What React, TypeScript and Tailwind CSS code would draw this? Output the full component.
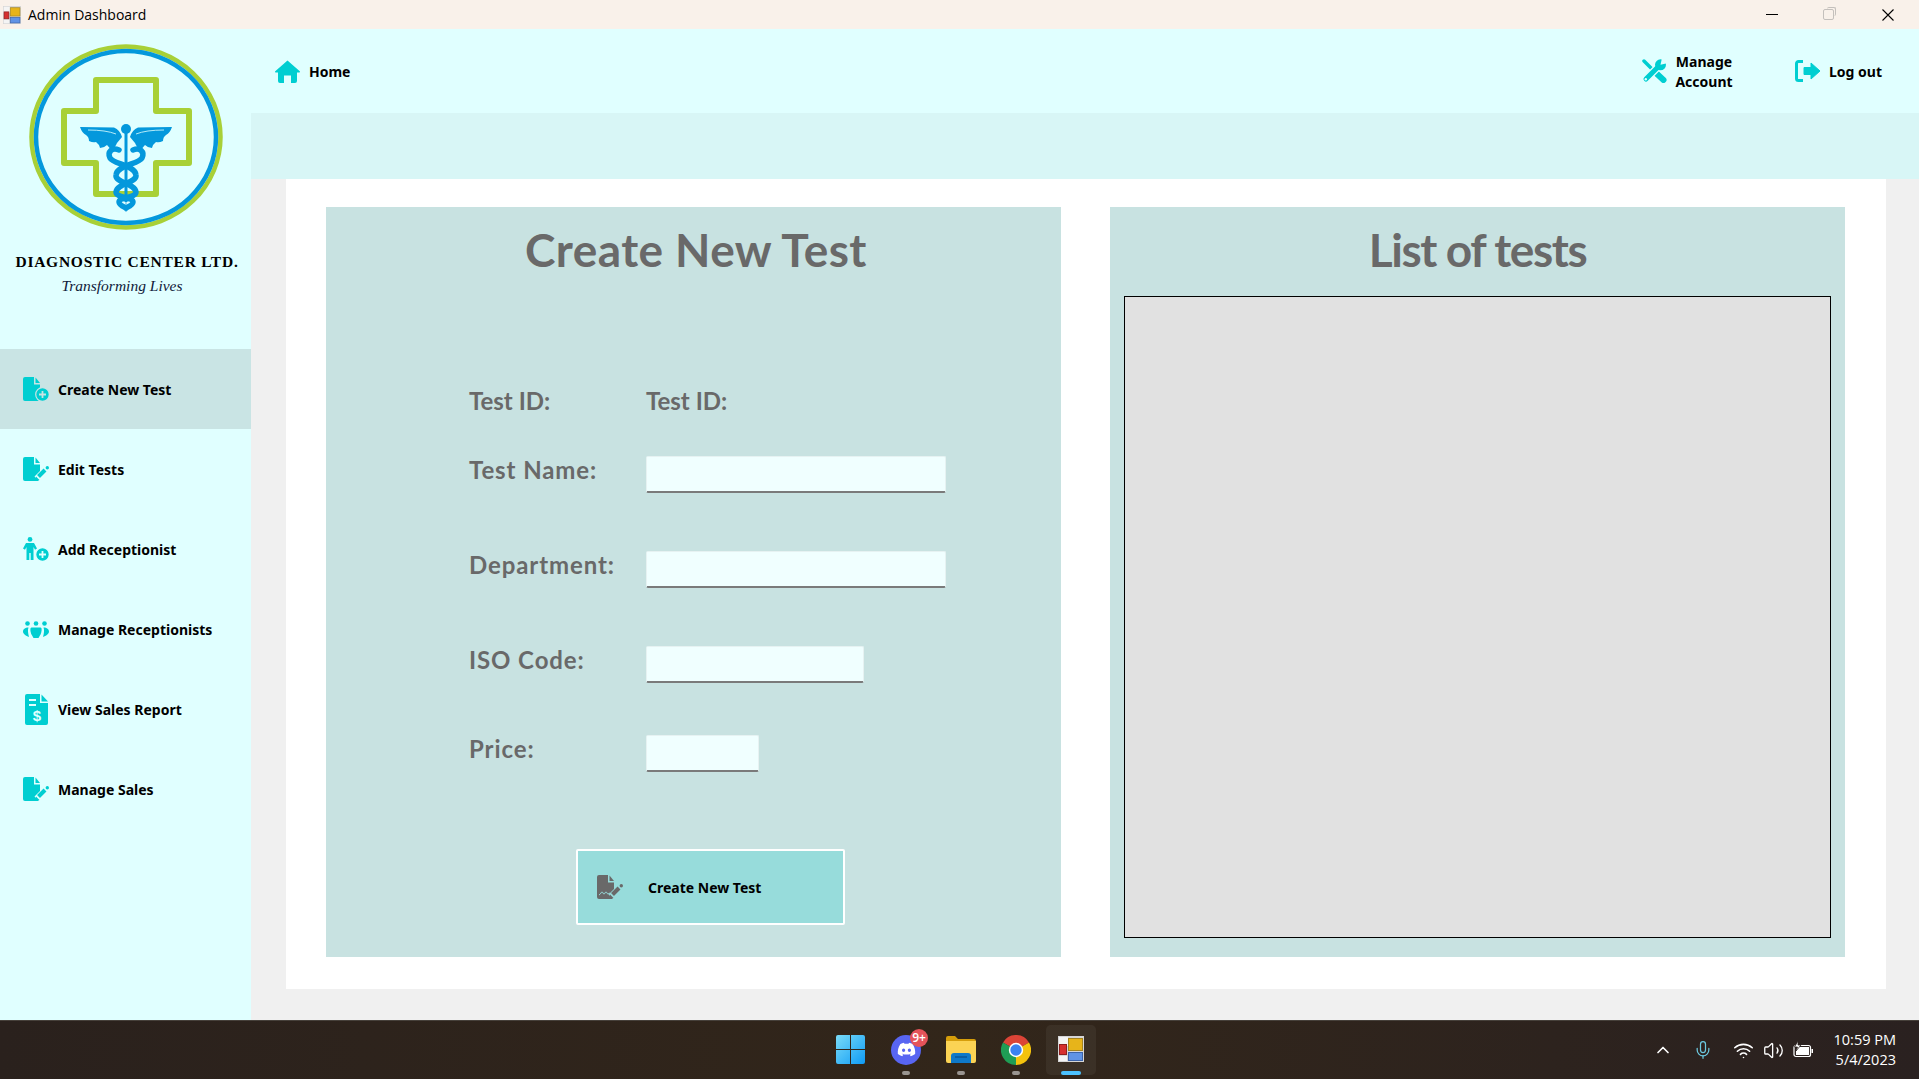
import { ChevronUp, Mic, Volume2, Wifi } from 'lucide-react';
import type { ReactNode } from 'react';
import { FaDiscord } from 'react-icons/fa6';

const TEAL = '#00CED1';
const SIDEBAR_BG = '#E0FFFF';
const ACTIVE_BG = '#C9E4E4';

function FileBody({ fill = TEAL }: { fill?: string }) {
    return (
        <>
            <path d="M2 0H11V7.5H17V22a2 2 0 0 1-2 2H2a2 2 0 0 1-2-2V2a2 2 0 0 1 2-2Z" fill={fill} />
            <path d="M12.5 .5 17 6H12.5Z" fill={fill} />
        </>
    );
}

function PlusBadge({ bg }: { bg: string }) {
    return (
        <>
            <circle cx="19.5" cy="17.5" r="6.8" fill={TEAL} stroke={bg} strokeWidth="1.2" />
            <path d="M19.5 14v7M16 17.5h7" stroke={bg} strokeWidth="1.8" />
        </>
    );
}

function Pencil({ bg, fill = TEAL }: { bg: string; fill?: string }) {
    return (
        <>
            <path d="M25 11 14 22" stroke={bg} strokeWidth="7" />
            <path d="M22 13 15.5 19.5" stroke={fill} strokeWidth="4" />
            <path d="M12 24l1-4.5 3.5 3.5Z" fill={fill} />
            <circle cx="24.3" cy="10.7" r="1.7" fill={fill} />
        </>
    );
}

function CreateTestIcon() {
    return (
        <svg width="26" height="24" viewBox="0 0 26 24">
            <FileBody />
            <PlusBadge bg={ACTIVE_BG} />
        </svg>
    );
}

function EditIcon() {
    return (
        <svg width="26" height="24" viewBox="0 0 26 24">
            <FileBody />
            <Pencil bg={SIDEBAR_BG} />
        </svg>
    );
}

function AddPersonIcon() {
    return (
        <svg width="26" height="24" viewBox="0 0 26 24">
            <circle cx="7" cy="2.4" r="2.4" fill={TEAL} />
            <path
                d="M3 6H11L14 11.5 12 12.7 10.5 10V23H7.7V16H6.3V23H3.5V10L2 12.7 0 11.5Z"
                fill={TEAL}
            />
            <PlusBadge bg={SIDEBAR_BG} />
        </svg>
    );
}

function GroupIcon() {
    return (
        <svg width="26" height="17" viewBox="0 0 26 17" fill={TEAL}>
            <circle cx="4.5" cy="2.5" r="2.3" />
            <circle cx="13" cy="2.5" r="2.3" />
            <circle cx="21.5" cy="2.5" r="2.3" />
            <path d="M8.5 6.5h9c1.500 0 1.500 3.500 0 7l-2 3.500h-5l-2-3.500c-1.500-3.500-1.500-7 0-7Z" />
            <path d="M5.500 6.500C2 6.500 0 8.500 0 10.500c0 2.500 3 4.500 6 5.500-1-4-1.500-7-.5-9.500Z" />
            <path d="M20.500 6.500c3.500 0 5.500 2 5.500 4 0 2.500-3 4.500-6 5.500 1-4 1.500-7 .5-9.500Z" />
        </svg>
    );
}

function ReportIcon() {
    return (
        <svg className="ml-[2px]" width="23" height="31" viewBox="0 0 23 31">
            <path d="M2 0H15V9H23V29a2 2 0 0 1-2 2H2a2 2 0 0 1-2-2V2a2 2 0 0 1 2-2Z" fill={TEAL} />
            <path d="M16.500 .5 23 7.500H16.500Z" fill={TEAL} />
            <path d="M4 6h7M4 11h7" stroke={SIDEBAR_BG} strokeWidth="2" />
            <text
                x="12"
                y="27"
                textAnchor="middle"
                fontSize="15"
                fontWeight="700"
                fontFamily="Liberation Sans"
                fill={SIDEBAR_BG}
            >
                $
            </text>
        </svg>
    );
}

function HomeIcon() {
    return (
        <svg width="25" height="23" viewBox="0 0 25 23">
            <path
                d="M12.500 .5 24.500 11a.8.8 0 0 1-.5 1.500H22V21a2 2 0 0 1-2 2H16V15.500H9V23H5a2 2 0 0 1-2-2V12.500H1A.8.8 0 0 1 .5 11Z"
                fill={TEAL}
            />
        </svg>
    );
}

function ToolsIcon() {
    return (
        <svg width="25" height="24" viewBox="0 0 25 24">
            <path d="M2 2 13 13" stroke={TEAL} strokeWidth="3.500" strokeLinecap="round" />
            <path d="M14 14 21.500 21" stroke={TEAL} strokeWidth="6" strokeLinecap="round" />
            <path d="M4 20 17 7" stroke={SIDEBAR_BG} strokeWidth="7.500" />
            <path d="M4 20 17 7" stroke={TEAL} strokeWidth="5" strokeLinecap="round" />
            <circle cx="18.500" cy="5.800" r="5.500" fill={TEAL} />
            <path d="M18.500 5.800 20 -1 26 4Z" fill={SIDEBAR_BG} />
            <circle cx="3.800" cy="20.200" r="1.200" fill={SIDEBAR_BG} />
        </svg>
    );
}

function LogoutIcon() {
    return (
        <svg width="25" height="22" viewBox="0 0 25 22">
            <path
                d="M8 1.500H3.500a2 2 0 0 0-2 2V18.500a2 2 0 0 0 2 2H8"
                fill="none"
                stroke={TEAL}
                strokeWidth="3"
            />
            <path d="M9 7.500H16V3L25 11 16 19V14.500H9Z" fill={TEAL} stroke={TEAL} strokeLinejoin="round" />
        </svg>
    );
}

function SignIcon() {
    return (
        <svg width="26" height="24" viewBox="0 0 26 24">
            <FileBody fill="#696969" />
            <Pencil bg="#97DCDB" fill="#696969" />
            <path d="M2 20c2-1 2-3 3-3s1 2 2 2 1-2 2-2 1 2 2 2 1-1 2-1" fill="none" stroke="#97DCDB" strokeWidth="1" />
        </svg>
    );
}

function AppIcon({ size }: { size: number }) {
    return (
        <svg width={size} height={size} viewBox="0 0 26 26">
            <rect width="26" height="26" fill="#D6D6D6" />
            <rect x="1" y="1" width="9" height="9" fill="#F4F4F4" />
            <rect x="10.500" y="2.500" width="14" height="12" fill="#E7B41A" stroke="#A58420" />
            <rect x="10.500" y="16.500" width="14" height="8" fill="#5F93E6" stroke="#3C63A8" />
            <rect x="1.500" y="8.500" width="7" height="10" fill="#D62F2F" stroke="#8E1F1F" />
            <rect x="1" y="20" width="8" height="5" fill="#F4F4F4" />
        </svg>
    );
}

function Logo() {
    const wing =
        'M54 90 L88 90.500 Q94 93 96 100 L91 106 Q89 111 85 113 Q83 110 81 108 Q78 111 74 111 Q73 107 70 105 Q67 106 63 104 Q63 100 60 98 Q56 96 54 90Z';
    const snake =
        'M93 113 C86 110 81 115 84 121 C87 127 109 128 110 138 C111 146 91 146 90 155 C90 161 107 160 107 165 C107 168 102 170 100 171';

    return (
        <svg width="200" height="200" viewBox="0 0 200 200">
            <ellipse cx="100" cy="100" rx="94.500" ry="90.500" fill="none" stroke="#A8D037" strokeWidth="4.500" />
            <ellipse cx="100" cy="100" rx="90" ry="86" fill="none" stroke="#0498DC" strokeWidth="4.500" />
            <path
                d="M70 43H130V74H163V126H130V157H70V126H38V74H70Z"
                fill="none"
                stroke="#A8D037"
                strokeWidth="6"
                strokeLinejoin="round"
            />
            <g fill="#0498DC">
                <path d={wing} />
                <path d={wing} transform="translate(200 0) scale(-1 1)" />
                <circle cx="100" cy="92" r="5" />
            </g>
            <path d="M62 93 Q80 93 90 97" fill="none" stroke={SIDEBAR_BG} strokeWidth=".8" />
            <path d="M138 93 Q120 93 110 97" fill="none" stroke={SIDEBAR_BG} strokeWidth=".8" />
            <path d="M100 95V165" stroke="#0498DC" strokeWidth="3" />
            <path d="M100 165V175" stroke="#7CCBEE" strokeWidth="1.500" />
            <path d={snake} fill="none" stroke="#0498DC" strokeWidth="5.500" strokeLinecap="round" />
            <path
                d={snake}
                fill="none"
                stroke="#0498DC"
                strokeWidth="5.500"
                strokeLinecap="round"
                transform="translate(200 0) scale(-1 1)"
            />
        </svg>
    );
}

const sidebarItems: { label: string; icon: ReactNode; active?: boolean }[] = [
    { label: 'Create New Test', icon: <CreateTestIcon />, active: true },
    { label: 'Edit Tests', icon: <EditIcon /> },
    { label: 'Add Receptionist', icon: <AddPersonIcon /> },
    { label: 'Manage Receptionists', icon: <GroupIcon /> },
    { label: 'View Sales Report', icon: <ReportIcon /> },
    { label: 'Manage Sales', icon: <EditIcon /> },
];

function Sidebar() {
    return (
        <aside className="flex w-[251px] shrink-0 flex-col bg-[#E0FFFF]">
            <div className="flex h-[320px] flex-col items-center">
                <div className="mt-[8px] ml-[1px]">
                    <Logo />
                </div>
                <p className="mt-[16px] ml-[3px] font-['Liberation_Serif',serif] text-[15.500px] leading-[18px] font-bold tracking-[0.75px] whitespace-nowrap text-black [font-variant:small-caps]">
                    DIAGNOSTIC CENTER LTD.
                </p>
                <p className="mt-[6px] mr-[7px] font-['Liberation_Serif',serif] text-[15.500px] leading-[18px] text-[#10203a] italic">
                    Transforming Lives
                </p>
            </div>
            {sidebarItems.map((item) => (
                <div
                    key={item.label}
                    className={`flex h-[80px] items-center ${item.active ? 'bg-[#C9E4E4]' : ''}`}
                >
                    <div className="flex w-[58px] shrink-0 pl-[23px]">{item.icon}</div>
                    <span className="text-[14px] font-bold text-black">{item.label}</span>
                </div>
            ))}
        </aside>
    );
}

function TopBar() {
    return (
        <div className="flex h-[84px] shrink-0 items-center bg-[#E0FFFF] pr-[37px] pl-[24px] text-[14px] font-bold text-black">
            <HomeIcon />
            <span className="ml-[9px]">Home</span>
            <div className="ml-auto flex items-center">
                <ToolsIcon />
                <span className="ml-[1px] w-[72px] pt-[2px] text-center leading-[20px]">
                    Manage
                    <br />
                    Account
                </span>
                <div className="ml-[55px]">
                    <LogoutIcon />
                </div>
                <span className="ml-[9px]">Log out</span>
            </div>
        </div>
    );
}

function Field({ label, width, className }: { label: string; width: string; className: string }) {
    return (
        <div className={`flex items-start ${className}`}>
            <label className="w-[177px] shrink-0 font-['Lato',sans-serif] text-[24px] leading-[28px] font-bold tracking-[0.9px] text-[#696969]">
                {label}
            </label>
            <input
                type="text"
                className={`h-[37px] ${width} rounded-[2px] border border-b-2 border-[#E6F2F2] border-b-[#7A7A7A] bg-[#F0FFFF] outline-none`}
            />
        </div>
    );
}

function CreateTestCard() {
    return (
        <section className="bg-[#C8E2E1]">
            <h1 className="pt-[20px] pl-[5px] text-center font-['Lato',sans-serif] text-[46px] leading-[46px] font-bold tracking-[0.4px] text-[#696969]">
                Create New Test
            </h1>
            <div className="pt-[114px] pl-[143px]">
                <div className="flex font-['Lato',sans-serif] text-[24px] leading-[28px] font-bold text-[#696969]">
                    <span className="w-[177px]">Test ID:</span>
                    <span>Test ID:</span>
                </div>
                <Field label="Test Name:" width="w-[300px]" className="mt-[41px]" />
                <Field label="Department:" width="w-[300px]" className="mt-[58px]" />
                <Field label="ISO Code:" width="w-[218px]" className="mt-[58px]" />
                <Field label="Price:" width="w-[113px]" className="mt-[52px]" />
            </div>
            <button
                type="button"
                className="mt-[77px] ml-[250px] flex h-[76px] w-[269px] items-center rounded-[2px] border-2 border-white bg-[#97DCDB] pl-[19px] text-[14px] font-bold text-black"
            >
                <SignIcon />
                <span className="ml-[25px]">Create New Test</span>
            </button>
        </section>
    );
}

function TestListCard() {
    return (
        <section className="flex flex-col bg-[#C8E2E1] px-[14px] pb-[19px]">
            <h2 className="h-[89px] pt-[20px] text-center font-['Lato',sans-serif] text-[46px] leading-[46px] font-bold tracking-[-1.4px] text-[#696969]">
                List of tests
            </h2>
            <div className="flex-1 border border-black bg-[#E1E1E1]" />
        </section>
    );
}

function WindowsLogo() {
    return (
        <svg width="29" height="29" viewBox="0 0 29 29">
            <defs>
                <linearGradient id="win" x1="0" y1="0" x2="1" y2="1">
                    <stop offset="0" stopColor="#7ADCF8" />
                    <stop offset="1" stopColor="#0F9BF5" />
                </linearGradient>
            </defs>
            <path d="M2 0H14V14H0V2a2 2 0 0 1 2-2ZM15 0H27a2 2 0 0 1 2 2V14H15ZM0 15H14V29H2a2 2 0 0 1-2-2ZM15 15H29V27a2 2 0 0 1-2 2H15Z" fill="url(#win)" />
        </svg>
    );
}

function FolderIcon() {
    return (
        <svg width="30" height="27" viewBox="0 0 30 27">
            <path d="M0 2a2 2 0 0 1 2-2H9l3 3H28a2 2 0 0 1 2 2V8H0Z" fill="#D69E0B" />
            <path d="M0 5H30V25a2 2 0 0 1-2 2H2a2 2 0 0 1-2-2Z" fill="#FBD354" />
            <path d="M5 27V20a3 3 0 0 1 3-3H22a3 3 0 0 1 3 3V27Z" fill="#0F79C9" />
            <path d="M9 21H21" stroke="#0A4E8C" strokeWidth="1.200" />
        </svg>
    );
}

function ChromeIcon() {
    return (
        <svg width="30" height="30" viewBox="0 0 30 30">
            <path d="M15 15 2 7.500A15 15 0 0 1 28 7.500Z" fill="#DB4437" />
            <path d="M15 15 28 7.500A15 15 0 0 1 15 30Z" fill="#F4C20D" />
            <path d="M15 15V30A15 15 0 0 1 2 7.500Z" fill="#1F9D55" />
            <circle cx="15" cy="15" r="7.200" fill="#FFFFFF" />
            <circle cx="15" cy="15" r="5.700" fill="#3B82F0" />
        </svg>
    );
}

function BatteryIcon() {
    return (
        <svg width="21" height="18" viewBox="0 0 21 18">
            <rect x="1" y="4.500" width="16.500" height="11" rx="2" fill="none" stroke="#fff" strokeWidth="1.200" />
            <path d="M3 14V8.500L6 6H16V14Z" fill="#fff" />
            <path d="M18.500 8h1.500v4h-1.500Z" fill="#fff" />
            <path d="M5 0 1.500 6H4.500L3 10 8 4H5Z" fill="#fff" stroke="#2A2120" strokeWidth=".8" />
        </svg>
    );
}

function TaskbarSlot({ children, running }: { children: ReactNode; running?: boolean }) {
    return (
        <div className="relative flex h-[59px] w-[55px] items-center justify-center pb-[1px]">
            {children}
            {running && (
                <span className="absolute bottom-[5px] left-1/2 h-[4px] w-[8px] -translate-x-1/2 rounded-full bg-[#9A9590]" />
            )}
        </div>
    );
}

function Taskbar() {
    return (
        <footer className="flex h-[59px] shrink-0 items-center border-t border-[#46403a] bg-gradient-to-r from-[#2A211D] via-[#32261A] to-[#2A2120] font-['Open_Sans',sans-serif] text-white">
            <div className="flex-1" />
            <div className="flex pl-[2px]">
                <div className="mr-[1px]">
                    <TaskbarSlot>
                        <WindowsLogo />
                    </TaskbarSlot>
                </div>
                <TaskbarSlot running>
                    <div className="relative flex size-[30px] items-center justify-center rounded-full bg-[#5865F2]">
                        <FaDiscord className="size-[19px] text-white" />
                        <span className="absolute -top-[6px] -right-[7px] flex size-[18px] items-center justify-center rounded-full bg-[#E5535A] text-[12px] leading-none font-semibold">
                            9+
                        </span>
                    </div>
                </TaskbarSlot>
                <TaskbarSlot running>
                    <FolderIcon />
                </TaskbarSlot>
                <TaskbarSlot running>
                    <ChromeIcon />
                </TaskbarSlot>
                <TaskbarSlot>
                    <div className="flex h-[50px] w-[50px] items-center justify-center rounded-[5px] bg-white/5 pb-[1px]">
                        <AppIcon size={26} />
                    </div>
                    <span className="absolute bottom-[5px] left-1/2 h-[4px] w-[20px] -translate-x-1/2 rounded-full bg-[#4CC2FF]" />
                </TaskbarSlot>
            </div>
            <div className="flex flex-1 items-center justify-end">
                <div className="flex w-[40px] justify-center">
                    <ChevronUp className="size-[20px]" strokeWidth={2} />
                </div>
                <div className="flex w-[40px] justify-center">
                    <Mic className="size-[20px] text-[#6CC9E0]" strokeWidth={1.5} />
                </div>
                <div className="ml-[5px] flex w-[30px] justify-center">
                    <Wifi className="size-[21px]" strokeWidth={1.8} />
                </div>
                <div className="flex w-[30px] justify-center">
                    <Volume2 className="size-[21px]" strokeWidth={1.5} />
                </div>
                <div className="flex w-[30px] justify-center">
                    <BatteryIcon />
                </div>
                <div className="mr-[23px] ml-[15px] w-[63px] text-right text-[14.500px] leading-[20px] whitespace-nowrap">
                    10:59 PM
                    <br />
                    5/4/2023
                </div>
            </div>
        </footer>
    );
}

export default function App() {
    return (
        <div className="flex h-[1079px] w-[1919px] flex-col overflow-hidden bg-[#F0F0F0] font-['Noto_Sans',sans-serif]">
            <header className="flex h-[29px] shrink-0 items-center bg-[#F9F1EA] pl-[3px]">
                <AppIcon size={18} />
                <span className="ml-[7px] font-['Open_Sans',sans-serif] text-[14px] text-black">Admin Dashboard</span>
                <div className="ml-auto flex items-center pr-[25px]">
                    <span className="h-px w-[12px] bg-black" />
                    <span className="relative ml-[45px] size-[11px] rounded-[2px] border border-[#C4C0BC]">
                        <span className="absolute -top-[3px] -right-[3px] size-[9px] rounded-[2px] border-t border-r border-[#C4C0BC]" />
                    </span>
                    <svg className="ml-[48px]" width="12" height="12" viewBox="0 0 12 12">
                        <path d="M.5.5l11 11M11.500.5l-11 11" stroke="#000" strokeWidth="1.100" />
                    </svg>
                </div>
            </header>
            <div className="flex min-h-0 flex-1">
                <Sidebar />
                <main className="flex min-w-0 flex-1 flex-col">
                    <TopBar />
                    <div className="h-[66px] shrink-0 bg-[#D8F6F6]" />
                    <div className="flex min-h-0 flex-1 pr-[33px] pb-[31px] pl-[35px]">
                        <div className="grid flex-1 grid-cols-2 gap-[49px] bg-white pt-[28px] pr-[41px] pb-[32px] pl-[40px]">
                            <CreateTestCard />
                            <TestListCard />
                        </div>
                    </div>
                </main>
            </div>
            <Taskbar />
        </div>
    );
}
